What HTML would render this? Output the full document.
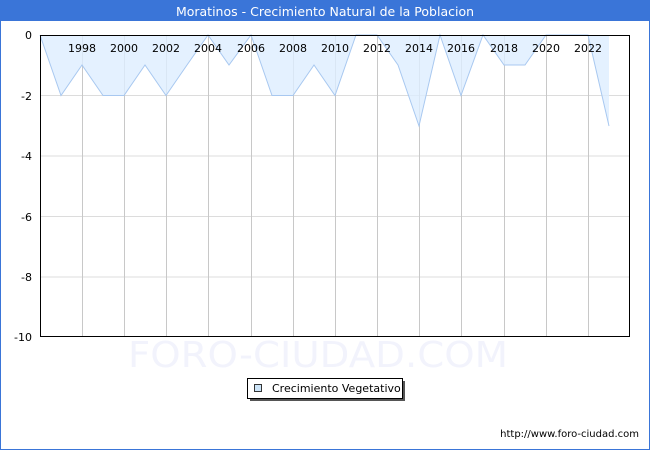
<!DOCTYPE html>
<html><head><meta charset="utf-8"><style>
html,body{margin:0;padding:0;width:650px;height:450px;overflow:hidden;background:#fff}
</style></head><body>
<svg width="650" height="450" xmlns="http://www.w3.org/2000/svg" font-family="'DejaVu Sans','Liberation Sans',sans-serif">
<rect x="0.5" y="0.5" width="649" height="449" fill="#fff" stroke="#3a75d8"/>
<rect x="0" y="0" width="650" height="21" fill="#3a75d8"/>
<text x="325" y="16" text-anchor="middle" fill="#fff" font-size="12.5">Moratinos - Crecimiento Natural de la Poblacion</text>
<text x="318" y="367" text-anchor="middle" fill="#f2f3fc" font-size="36" textLength="380" lengthAdjust="spacingAndGlyphs">FORO-CIUDAD.COM</text>
<g stroke="#dcdcdc" stroke-width="1">
<line x1="40" y1="95.5" x2="630" y2="95.5"/><line x1="40" y1="156" x2="630" y2="156"/>
<line x1="40" y1="216.5" x2="630" y2="216.5"/><line x1="40" y1="277" x2="630" y2="277"/>
</g>
<g stroke="#c8c8c8" stroke-width="1">
<line x1="82.5" y1="35" x2="82.5" y2="337"/><line x1="124.5" y1="35" x2="124.5" y2="337"/>
<line x1="166.5" y1="35" x2="166.5" y2="337"/><line x1="208.5" y1="35" x2="208.5" y2="337"/>
<line x1="251.5" y1="35" x2="251.5" y2="337"/><line x1="293.5" y1="35" x2="293.5" y2="337"/>
<line x1="335.5" y1="35" x2="335.5" y2="337"/><line x1="377.5" y1="35" x2="377.5" y2="337"/>
<line x1="419.5" y1="35" x2="419.5" y2="337"/><line x1="461.5" y1="35" x2="461.5" y2="337"/>
<line x1="504.5" y1="35" x2="504.5" y2="337"/><line x1="546.5" y1="35" x2="546.5" y2="337"/>
<line x1="588.5" y1="35" x2="588.5" y2="337"/>
</g>
<polygon fill="#ddeeff" fill-opacity="0.8" stroke="none" points="40,35 61,95.5 82,65 103,95.5 124,95.5 145,65 166,95.5 187,65 208,35 229,65 251,35 272,95.5 293,95.5 314,65 335,95.5 356,35 377,35 398,65 419,126 440,35 461,95.5 483,35 504,65 525,65 546,35 567,35 588,35 609,126 609,35"/>
<polyline fill="none" stroke="#a8c8f0" stroke-width="1" points="40,35 61,95.5 82,65 103,95.5 124,95.5 145,65 166,95.5 187,65 208,35 229,65 251,35 272,95.5 293,95.5 314,65 335,95.5 356,35 377,35 398,65 419,126 440,35 461,95.5 483,35 504,65 525,65 546,35 567,35 588,35 609,126"/>
<rect x="40.5" y="35.5" width="589" height="301" fill="none" stroke="#000"/>
<g font-size="11" fill="#000" text-anchor="middle">
<text x="82" y="52">1998</text><text x="124" y="52">2000</text><text x="166" y="52">2002</text>
<text x="208" y="52">2004</text><text x="251" y="52">2006</text><text x="293" y="52">2008</text>
<text x="335" y="52">2010</text><text x="377" y="52">2012</text><text x="419" y="52">2014</text>
<text x="461" y="52">2016</text><text x="504" y="52">2018</text><text x="546" y="52">2020</text>
<text x="588" y="52">2022</text>
</g>
<g font-size="11" fill="#000" text-anchor="end">
<text x="32" y="39">0</text><text x="32" y="100">-2</text><text x="32" y="160">-4</text>
<text x="32" y="221">-6</text><text x="32" y="281">-8</text><text x="32" y="341">-10</text>
</g>
<rect x="250" y="381" width="155" height="20" fill="#555"/>
<rect x="247.5" y="378.5" width="155" height="20" fill="#fff" stroke="#000"/>
<rect x="254.5" y="384.5" width="7" height="7" fill="#cce4f8" stroke="#333"/>
<text x="272" y="392" font-size="11">Crecimiento Vegetativo</text>
<text x="639" y="437" font-size="10" text-anchor="end">http://www.foro-ciudad.com</text>
</svg>
</body></html>
